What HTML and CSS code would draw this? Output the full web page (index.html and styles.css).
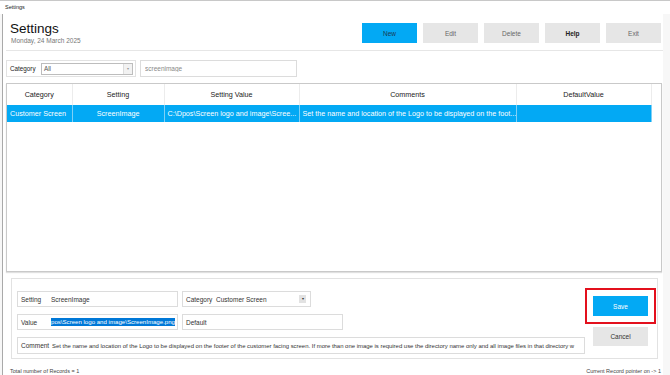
FILE: index.html
```html
<!DOCTYPE html>
<html lang="en">

<head>
  <meta charset="UTF-8">
  <meta name="viewport" content="width=device-width, initial-scale=1.0">
  <title>Settings</title>
  <link rel="stylesheet" href="styles.css">
</head>

<body>
  <div class="titlebar">Settings</div>
  <div class="window">
    <div class="top">
      <div class="heading">
        <h1>Settings</h1>
        <div class="date">Monday, 24 March 2025</div>
      </div>
      <div class="actions">
        <button class="btn btn-blue">New</button>
        <button class="btn">Edit</button>
        <button class="btn">Delete</button>
        <button class="btn btn-dark">Help</button>
        <button class="btn">Exit</button>
      </div>
    </div>

    <div class="filters">
      <div class="filter-group">
        <label for="category">Category</label>
        <div class="select">
          <span>All</span>
          <span class="select-arrow">&#9662;</span>
        </div>
      </div>
      <input class="search" type="text" placeholder="screenimage">
    </div>

    <div class="grid">
      <table>
        <colgroup>
          <col style="width:65px">
          <col style="width:92px">
          <col style="width:135px">
          <col style="width:217px">
          <col style="width:135px">
        </colgroup>
        <thead>
          <tr>
            <th>Category</th>
            <th>Setting</th>
            <th>Setting Value</th>
            <th>Comments</th>
            <th>DefaultValue</th>
          </tr>
        </thead>
        <tbody>
          <tr class="selected">
            <td>Customer Screen</td>
            <td class="center">ScreenImage</td>
            <td>C:\Dpos\Screen logo and image\Scree...</td>
            <td>Set the name and location of the Logo to be displayed on the foot...</td>
            <td></td>
          </tr>
        </tbody>
      </table>
    </div>

    <div class="editor">
      <div class="fields">
        <div class="field-row">
          <div class="field w-wide"><span class="field-label">Setting</span><span>ScreenImage</span></div>
          <div class="field w-cat">
            <span class="field-label">Category</span><span>Customer Screen</span>
            <span class="mini-drop">&#9662;</span>
          </div>
        </div>
        <div class="field-row">
          <div class="field w-wide"><span class="field-label">Value</span><span class="highlight">pos\Screen logo and image\ScreenImage.png</span></div>
          <div class="field w-wide plain"><span>Default</span></div>
        </div>
        <div class="field-row">
          <div class="field w-comment"><span class="field-label">Comment</span><span class="clip">Set the name and location of the Logo to be displayed on the footer of the customer facing screen. If more than one image is required use the directory name only and all image files in that directory w</span></div>
        </div>
      </div>
      <div class="editor-actions">
        <button class="btn btn-save">Save</button>
        <button class="btn btn-cancel">Cancel</button>
      </div>
    </div>

    <div class="status">
      <span>Total number of Records = 1</span>
      <span>Current Record pointer on -&gt; 1</span>
    </div>
  </div>
</body>

</html>
```

FILE: styles.css
```css
body {
  margin: 0;
  font-family: "Liberation Sans", Arial, sans-serif;
  background-color: #f7f7f7;
  color: #222;
  width: 670px;
  height: 375px;
  overflow: hidden;
}

.titlebar {
  height: 13px;
  border-top: 1px solid #c8c8c8;
  background-color: #fff;
  font-size: 5.5px;
  line-height: 12px;
  padding-left: 5px;
}

.window {
  margin-left: 2px;
  width: 661px;
  height: 361px;
  box-sizing: border-box;
  border-left: 1px solid #a9a9a9;
  background-color: #fff;
}

.top {
  display: flex;
  justify-content: space-between;
  height: 37px;
  box-sizing: border-box;
  margin-left: 3px;
  padding: 6px 2px 0 4px;
  border-bottom: 1px solid #e6e6e6;
}

.heading h1 {
  margin: 0;
  font-size: 13.5px;
  font-weight: normal;
  line-height: 17px;
  color: #111;
}

.date {
  font-size: 6.5px;
  color: #777;
  margin-left: 1px;
  line-height: 8px;
}

.actions {
  display: flex;
  gap: 6px;
  margin-top: 3px;
  align-self: flex-start;
}

.btn {
  width: 55px;
  height: 20px;
  border: none;
  padding: 0;
  background-color: #e6e6e6;
  color: #666;
  font-family: "Liberation Sans", Arial, sans-serif;
  font-size: 6.5px;
}

.btn-blue {
  background-color: #03a9f4;
  color: #1a3a55;
}

.btn-dark {
  color: #222;
  font-weight: bold;
}

.filters {
  display: flex;
  gap: 4px;
  margin: 9px 0 0 3px;
}

.filter-group {
  display: flex;
  align-items: center;
  width: 130px;
  height: 17px;
  box-sizing: border-box;
  border: 1px solid #e2e2e2;
  padding-left: 3px;
  font-size: 6.3px;
}

.filter-group label {
  width: 31px;
}

.select {
  display: flex;
  justify-content: space-between;
  align-items: center;
  width: 92px;
  height: 12px;
  box-sizing: border-box;
  border: 1px solid #bdbdbd;
  padding-left: 2px;
  color: #555;
}

.select-arrow {
  width: 8px;
  height: 10px;
  border-left: 1px solid #ddd;
  background-color: #f2f2f2;
  font-size: 4px;
  line-height: 10px;
  text-align: center;
  color: #999;
}

.search {
  width: 157px;
  height: 17px;
  box-sizing: border-box;
  border: 1px solid #dcdcdc;
  padding: 0 4px;
  font-family: "Liberation Sans", Arial, sans-serif;
  font-size: 6.5px;
  outline: none;
}

.search::placeholder {
  color: #888;
}

.grid {
  margin: 6px 0 0 3px;
  width: 656px;
  height: 189px;
  box-sizing: border-box;
  border: 1px solid #c9c9c9;
  box-shadow: 0 1px 1px #e0e0e0;
}

table {
  border-collapse: collapse;
  table-layout: fixed;
  width: 644px;
  font-size: 7.2px;
}

th {
  height: 21px;
  font-weight: normal;
  color: #222;
  border-right: 1px solid #ececec;
  padding: 0;
}

td {
  height: 17px;
  padding: 0 3px;
  white-space: nowrap;
  overflow: hidden;
  border-right: 1px solid #7fd0f6;
}

.selected td {
  background-color: #03a9f4;
  color: #fff;
}

.center {
  text-align: center;
}

.editor {
  display: flex;
  margin: 6px 0 0 8px;
  width: 647px;
  height: 81px;
  box-sizing: border-box;
  border: 1px solid #e2e2e2;
  padding: 12px 0 0 5px;
}

.fields {
  display: flex;
  flex-direction: column;
  gap: 7px;
  width: 568px;
}

.field-row {
  display: flex;
  gap: 4px;
}

.field {
  display: flex;
  align-items: center;
  height: 16px;
  box-sizing: border-box;
  border: 1px solid #dcdcdc;
  padding-left: 3px;
  font-size: 6.5px;
  color: #333;
  position: relative;
  overflow: hidden;
  white-space: nowrap;
}

.field-label {
  flex: none;
  width: 30px;
}

.w-wide {
  width: 161px;
}

.w-cat {
  width: 129px;
}

.w-comment {
  width: 568px;
  height: 17px;
}

.w-comment .field-label {
  width: 31px;
}

.highlight {
  background-color: #0078d7;
  color: #fff;
  font-size: 6.1px;
  line-height: 8px;
}

.mini-drop {
  position: absolute;
  right: 4px;
  top: 3px;
  width: 7px;
  height: 8px;
  background-color: #e2e2e2;
  font-size: 4px;
  line-height: 8px;
  text-align: center;
  color: #333;
}

.clip {
  font-size: 5.95px;
}

.editor-actions {
  display: flex;
  flex-direction: column;
  gap: 11px;
  margin: 5px 0 0 8px;
}

.btn-save {
  background-color: #03a9f4;
  color: #fff;
  outline: 2px solid #e3101d;
  outline-offset: 6px;
}

.btn-cancel {
  color: #333;
  height: 19px;
}

.status {
  display: flex;
  justify-content: space-between;
  margin: 9px 0 0 7px;
  width: 651px;
  font-size: 5.5px;
  color: #444;
}
```
